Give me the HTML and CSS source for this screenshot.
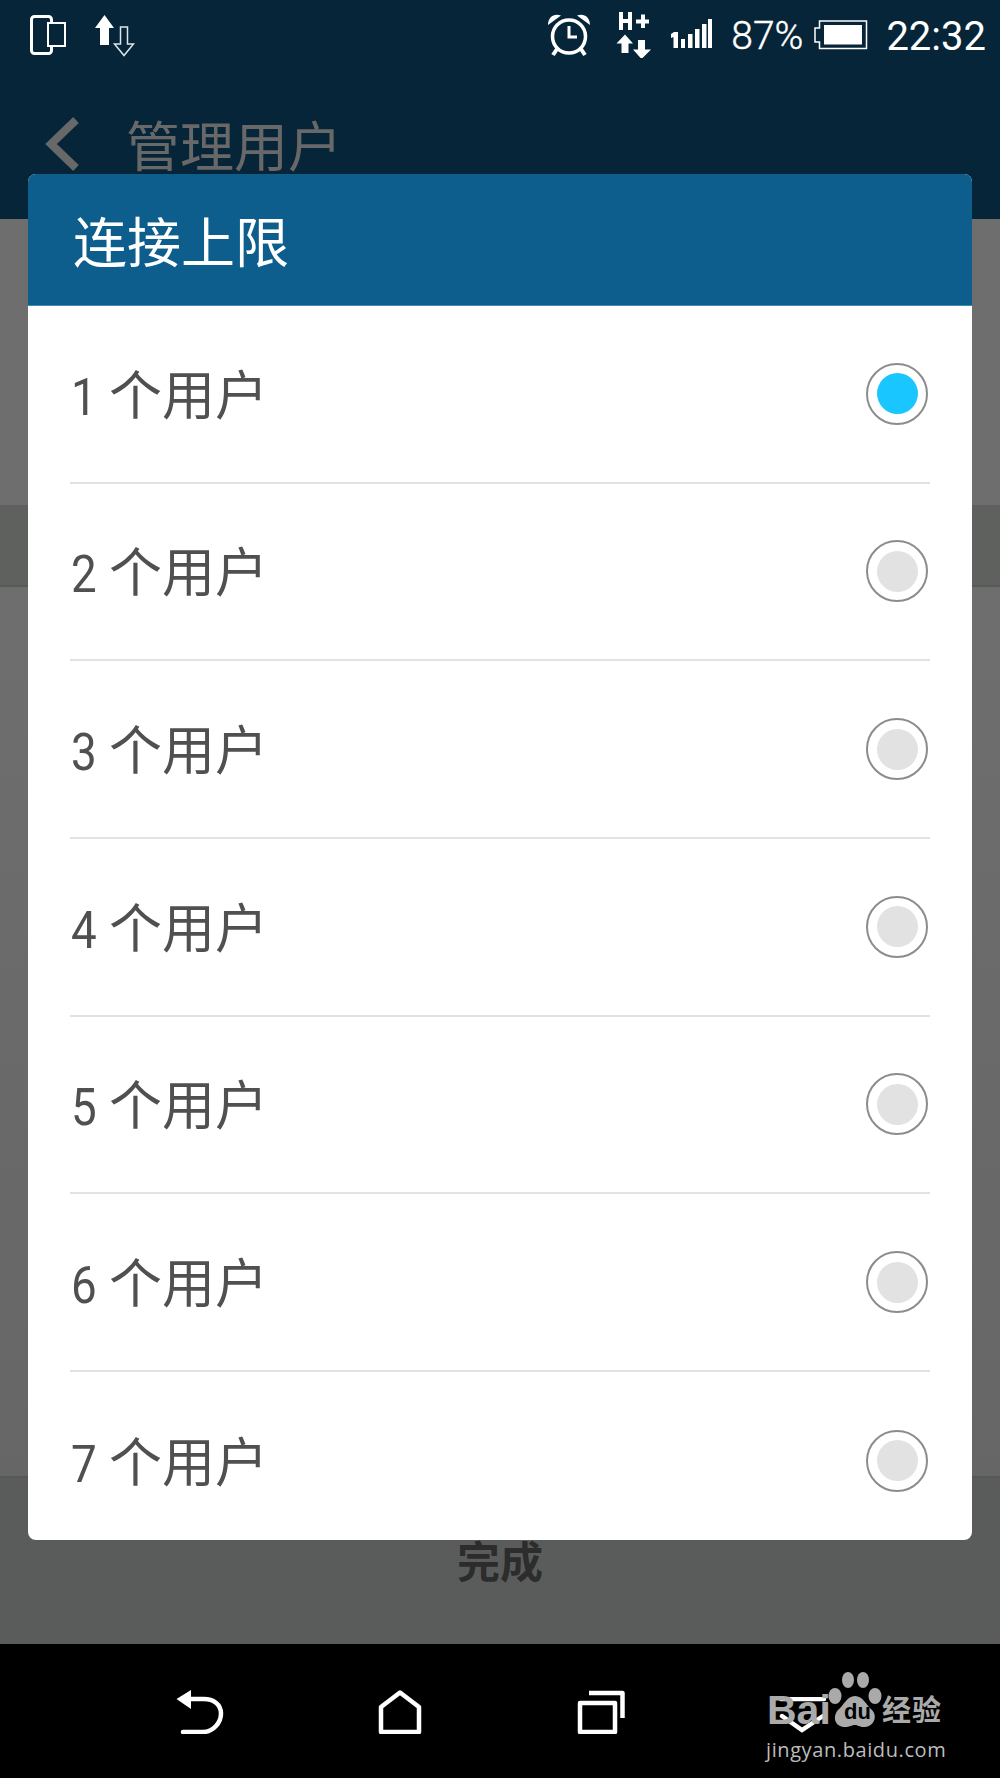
FILE: index.html
```html
<!DOCTYPE html>
<html lang="zh-CN">
<head>
<meta charset="utf-8">
<title>连接上限</title>
<link rel="stylesheet" href="styles.css">
</head>
<body>
<div class="page">
  <header class="topbar">
    <div class="status">
      <svg class="ic-phone" viewBox="0 0 36 40" width="36" height="40"><rect x="1.5" y="1.5" width="20" height="37" rx="3" fill="none" stroke="#fff" stroke-width="3"/><rect x="18" y="8" width="17" height="23" fill="#062538" stroke="#fff" stroke-width="2"/></svg>
      <svg class="ic-updown" viewBox="0 0 40 42" width="40" height="42"><path d="M9.500 0L19 13H14V30H5V13H0Z" fill="#fff"/><path d="M25.500 12H32.500V29H38.500L29 40.500L19.500 29H25.500Z" fill="none" stroke="#dfe5e8" stroke-width="1.500"/></svg>
      <span class="spacer"></span>
      <svg class="ic-alarm" viewBox="0 0 44 44" width="44" height="44"><circle cx="22" cy="23.500" r="16.500" fill="none" stroke="#fff" stroke-width="3.500"/><path d="M22 13V24H30" fill="none" stroke="#fff" stroke-width="3"/><path d="M1 12C1 4 7 0 14 2.500Z M43 12C43 4 37 0 30 2.500Z" fill="#fff"/><path d="M10 36L6 42M34 36L38 42" stroke="#fff" stroke-width="4"/></svg>
      <svg class="ic-hplus" viewBox="0 0 36 46" width="36" height="46"><path d="M3 0H7V7H12V0H16V18H12V11H7V18H3Z M25 2.500H29V7.500H33V11.500H29V16H25V11.500H20V7.500H25Z" fill="#fff"/><path d="M9 22.500L17 31.500H12.500V41H5.500V31.500H0.500Z M22 28H29V37.500H35L25.500 47L17 37.500H22Z" fill="#fff"/></svg>
      <svg class="ic-signal" viewBox="0 0 42 30" width="42" height="30"><path d="M1 15L4 13H8V29H3.500V18L1 19Z" fill="#fff"/><path d="M11 20H15V29H11Z M18 15H22.500V29H18Z M25 10H29.500V29H25Z M32 5H36.500V29H32Z M38 0H42V29H38Z" fill="#fff"/></svg>
      <span class="pct">87%</span>
      <svg class="ic-batt" viewBox="0 0 54 30" width="54" height="30"><path d="M5.500 1H52.500V28.500H5.500V22H1V8H5.500Z" fill="none" stroke="#fff" stroke-width="1.500"/><rect x="10" y="5" width="38" height="19.500" fill="#fff"/></svg>
      <span class="clock">22:32</span>
    </div>
    <div class="appbar">
      <svg class="ic-chev" viewBox="0 0 36 54" width="36" height="54"><path d="M32 3L7 27L32 51" fill="none" stroke="#686868" stroke-width="8"/></svg>
      <h1 class="apptitle">管理用户</h1>
    </div>
  </header>
  <main class="behind">
    <section class="band-a"></section>
    <section class="band-b"></section>
    <section class="band-c"></section>
    <section class="band-d"><span class="done">完成</span></section>
  </main>
  <nav class="navbar">
    <svg class="nav-back" viewBox="0 0 48 44" width="48" height="44"><path d="M0.500 9L15 0V19Z" fill="#fff"/><path d="M12 9H28C37 9 45 14 45 23.500C45 33 37 42 27 42H7" fill="none" stroke="#fff" stroke-width="4.500" stroke-linecap="round"/></svg>
    <svg class="nav-home" viewBox="0 0 44 44" width="44" height="44"><path d="M22 2.500L41 17V42H3V17Z" fill="none" stroke="#fff" stroke-width="4.500" stroke-linejoin="round"/></svg>
    <svg class="nav-recent" viewBox="0 0 48 44" width="48" height="44"><rect x="3" y="13" width="35" height="29" fill="none" stroke="#fff" stroke-width="4.500" stroke-linejoin="round"/><path d="M12 3H45.500V28" fill="none" stroke="#fff" stroke-width="4.500" stroke-linejoin="round"/></svg>
    <svg class="nav-menu" viewBox="0 0 48 40" width="48" height="40"><path d="M2 2H45" stroke="#fff" stroke-width="4.500" stroke-linecap="round"/><path d="M3 19L23 33L44 19" fill="none" stroke="#fff" stroke-width="4.500" stroke-linecap="round"/></svg>
  </nav>

  <div class="dialog">
    <h2 class="dialog-title">连接上限</h2>
    <ul class="options">
      <li class="option"><span class="label"><span class="num">1</span>个用户</span><span class="radio on"></span></li>
      <li class="option"><span class="label"><span class="num">2</span>个用户</span><span class="radio"></span></li>
      <li class="option"><span class="label"><span class="num">3</span>个用户</span><span class="radio"></span></li>
      <li class="option"><span class="label"><span class="num">4</span>个用户</span><span class="radio"></span></li>
      <li class="option"><span class="label"><span class="num">5</span>个用户</span><span class="radio"></span></li>
      <li class="option"><span class="label"><span class="num">6</span>个用户</span><span class="radio"></span></li>
      <li class="option"><span class="label"><span class="num">7</span>个用户</span><span class="radio"></span></li>
    </ul>
  </div>

  <div class="watermark">
    <div class="wm-top">
      <span class="wm-bai">Bai</span>
      <svg class="wm-paw" viewBox="0 0 54 56" width="54" height="56"><ellipse cx="7" cy="24" rx="6.500" ry="8" fill="#aaa"/><ellipse cx="20" cy="8" rx="6" ry="8" fill="#aaa"/><ellipse cx="35" cy="8" rx="6" ry="8" fill="#aaa"/><ellipse cx="47" cy="24" rx="6.500" ry="8" fill="#aaa"/><path d="M27 24C35 24 38 33 44 38C50 44 46 55 36 55C31 55 30 53 27 53C24 53 22 55 17 55C7 55 4 45 10 38C16 33 19 24 27 24Z" fill="#aaa"/></svg>
      <span class="wm-du">du</span>
      <span class="wm-jy">经验</span>
    </div>
    <div class="wm-url">jingyan.baidu.com</div>
  </div>
</div>
</body>
</html>
```
FILE: styles.css
```css
* { box-sizing: border-box; }
html, body { margin: 0; padding: 0; background: #000; }
.page {
  position: relative;
  width: 1000px;
  height: 1778px;
  overflow: hidden;
  display: flex;
  flex-direction: column;
  font-family: Roboto, "Noto Sans CJK SC", sans-serif;
}
.topbar { height: 219px; background: #062538; flex: none; }
.status {
  height: 74px;
  display: flex;
  align-items: flex-start;
  padding: 0 14px 0 30px;
  color: #fff;
}
.status svg { flex: none; display: block; }
.ic-phone { margin-top: 15px; }
.ic-updown { margin: 15px 0 0 29px; }
.spacer { flex: 1; }
.ic-alarm { margin-top: 13px; }
.ic-hplus { margin: 12px 0 0 25px; }
.ic-signal { margin: 19px 0 0 18px; }
.pct { margin: 13px 0 0 19px; font-size: 39px; line-height: 47px; font-weight: 300; -webkit-text-stroke: .4px #fff; }
.ic-batt { margin: 20px 0 0 11px; }
.clock { margin: 13px 0 0 18px; font-size: 40px; line-height: 47px; }
.appbar {
  height: 140px;
  display: flex;
  align-items: center;
  padding: 0 0 0 44px;
}
.ic-chev { display: block; flex: none; }
.apptitle {
  margin: 0 0 0 46px;
  font-size: 54px;
  line-height: 70px;
  font-weight: 400;
  color: #686868;
  font-family: "Noto Sans CJK SC", sans-serif;
}
.behind { height: 1425px; display: flex; flex-direction: column; flex: none; }
.band-a { height: 286px; background: #6e6e6e; }
.band-b { height: 82px; background: #5f615f; border-bottom: 2px solid #585a58; }
.band-c { height: 891px; background: linear-gradient(#6e6e6e, #666); border-bottom: 2px solid #565756; }
.band-d { height: 166px; background: #5a5c5b; display: flex; justify-content: center; padding-top: 53px; }
.done {
  font-family: "Noto Sans CJK SC", sans-serif;
  font-size: 43px;
  line-height: 60px;
  font-weight: 700;
  color: #2c2c2c;
  height: 60px;
  margin-top: -2px;
}
.navbar { flex: 1; background: #000; position: relative; display: flex; align-items: flex-start; padding: 46px 0 0 176px; }
.navbar svg { display: block; flex: none; }
.nav-home { margin-left: 154px; }
.nav-recent { margin-left: 155px; }
.nav-menu { margin: 7px 0 0 154px; }

.dialog {
  position: absolute;
  left: 28px;
  top: 174px;
  width: 944px;
  height: 1366px;
  border-radius: 8px;
  overflow: hidden;
  background: #fff;
}
.dialog-title {
  margin: 0;
  height: 132px;
  padding-left: 45px;
  background: #0d5e8c;
  border-bottom: 1px solid #3f8cb8;
  color: #fff;
  font-family: "Noto Sans CJK SC", sans-serif;
  font-weight: 400;
  font-size: 54px;
  line-height: 131px;
}
.options { list-style: none; margin: 0; padding: 0 42px; }
.option {
  height: 177.67px;
  display: flex;
  align-items: center;
  justify-content: space-between;
  padding: 0 2px 0 1px;
  border-bottom: 2px solid #e2e2e2;
}
.option:last-child { border-bottom: 0; }
.label {
  font-family: "Noto Sans CJK SC", sans-serif;
  font-weight: 400;
  font-size: 53px;
  line-height: 70px;
  padding-top: 2px;
  color: #505050;
  display: flex;
  align-items: baseline;
}
.num {
  font-family: Roboto, sans-serif;
  font-weight: 400;
  font-size: 52px;
  width: 38px;
  transform: scaleX(.88);
  transform-origin: left;
}
.radio {
  width: 62px;
  height: 62px;
  border-radius: 50%;
  border: 2px solid #8c8c8c;
  background: #fff;
  display: flex;
  align-items: center;
  justify-content: center;
}
.radio::after {
  content: "";
  width: 41px;
  height: 41px;
  border-radius: 50%;
  background: #e2e2e2;
}
.radio.on::after { background: #1ac6ff; }

.watermark {
  position: absolute;
  left: 766px;
  top: 1670px;
  width: 190px;
  color: #aaa;
}
.wm-top { position: relative; height: 66px; }
.wm-bai { position: absolute; left: 1px; top: 18px; font: 700 41px/44px "Liberation Sans", sans-serif; letter-spacing: 0; }
.wm-paw { position: absolute; left: 62px; top: 2px; display: block; }
.wm-du { position: absolute; left: 78px; top: 30px; font: 700 22px/24px "Liberation Sans", sans-serif; color: #000; letter-spacing: 0; }
.wm-jy { position: absolute; left: 116px; top: 20px; font: 700 29px/36px "Noto Sans CJK SC", sans-serif; letter-spacing: 1px; }
.wm-url { font: 400 20px/24px "Open Sans", sans-serif; letter-spacing: .6px; white-space: nowrap; margin-top: 2px; color: #bdbdbd; }
```
